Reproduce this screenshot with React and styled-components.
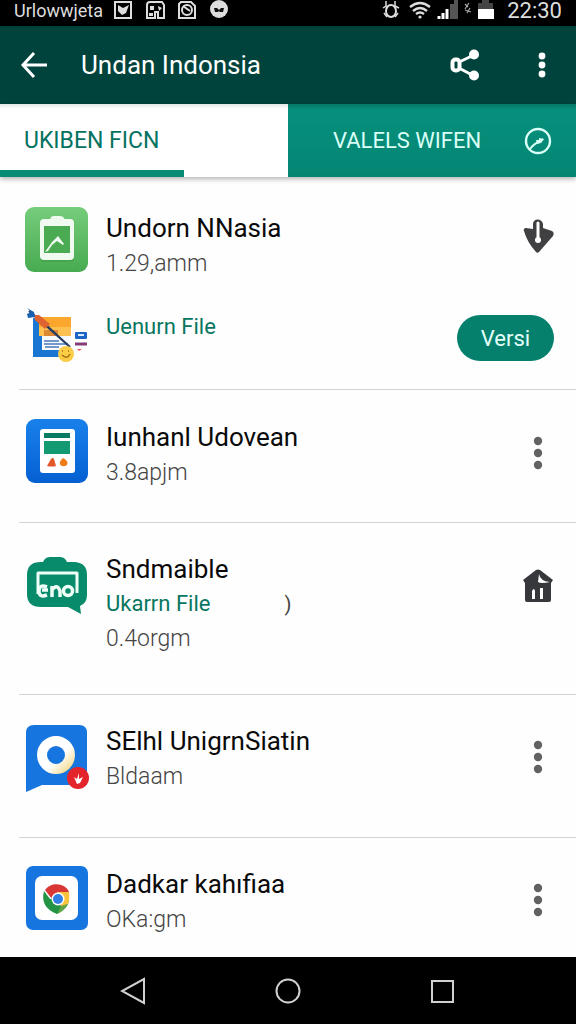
import React from "react";
import styled, { createGlobalStyle } from "styled-components";

export default function App() {
  return (
    <>
      <GlobalStyle />
      <Page>
        <StatusBar>
          <StatusGroup>
            <span>Urlowwjeta</span>
            <StatusIcons />
          </StatusGroup>
          <StatusGroup $end>
            <SystemIcons />
            <time>22:30</time>
          </StatusGroup>
        </StatusBar>
        <Header>
          <IconButton aria-label="Back">
            <svg width="28" height="28" viewBox="0 0 28 28" fill="none" stroke="#fff" strokeWidth="3">
              <path d="M14 2 3 14l11 12M3 14h24" />
            </svg>
          </IconButton>
          <Title>Undan Indonsia</Title>
          <IconButton aria-label="Share">
            <svg width="30" height="32" viewBox="0 0 30 32" fill="none" stroke="#fff">
              <path d="M24 6 7 14M7 18l17 9" strokeWidth="3" />
              <rect x="2.500" y="10.500" width="7" height="11" rx="3" strokeWidth="4" fill="#00433d" />
              <circle cx="24" cy="5.500" r="5" fill="#fff" stroke="none" />
              <circle cx="24" cy="26.500" r="5" fill="#fff" stroke="none" />
            </svg>
          </IconButton>
          <IconButton aria-label="More options">
            <Dots color="#fff" r={3.4} gap={9} />
          </IconButton>
        </Header>
        <Tabs>
          <Tab $active>UKIBEN FICN</Tab>
          <Tab>
            VALELS WIFEN
            <svg width="28" height="28" viewBox="0 0 28 28" fill="none" stroke="#d9fff6">
              <circle cx="14" cy="14" r="12" strokeWidth="2.4" />
              <path d="M6 22c3-4 5-6 9-7l4-3" strokeWidth="2" />
              <path d="m12 13 3 0 0-2 5 1-3 4-4 1Z" fill="#d9fff6" stroke="none" />
            </svg>
          </Tab>
        </Tabs>
        <List>
          <Item $top={30} $bottom={24}>
            <Line>
              <ClipboardIcon />
              <Texts $low>
                <Name>Undorn NNasia</Name>
                <Meta>1.29,amm</Meta>
              </Texts>
              <IconButton aria-label="Tag">
                <svg width="32" height="60" viewBox="0 0 32 60">
                  <path d="M2 24c-1-1 0-3 2-3l7 1v-5c0-6 9-6 10 0v4l9 3c2 1 2 3 1 5L17 45c-1 1-2 1-3 0Q5 35 2 24Z" fill="#404043" />
                  <path d="M16 16v17" stroke="#fff" strokeWidth="3" strokeLinecap="round" />
                  <circle cx="16" cy="33" r="3" fill="#fff" />
                </svg>
              </IconButton>
            </Line>
            <Line $gap>
              <PaintIcon />
              <Texts $low>
                <FileLink href="#file">Uenurn File</FileLink>
              </Texts>
              <VersionButton>Versi</VersionButton>
            </Line>
          </Item>
          <Item $top={29} $bottom={31}>
            <Line>
              <DocumentIcon />
              <Texts>
                <Name>Iunhanl Udovean</Name>
                <Meta>3.8apjm</Meta>
              </Texts>
              <MoreButton />
            </Line>
          </Item>
          <Item $top={28} $bottom={37}>
            <Line>
              <ChatIcon />
              <Texts>
                <Name>Sndmaible</Name>
                <FileRow>
                  <FileLink href="#file">Ukarrn File</FileLink>
                  <span>)</span>
                </FileRow>
                <Meta>0.4orgm</Meta>
              </Texts>
              <IconButton aria-label="Home">
                <svg width="32" height="70" viewBox="0 0 32 70">
                  <path d="m1 29 13-10q2-1 4 0l13 10-2 3H3Z" fill="#37383b" />
                  <path d="M3 31h26v18q0 2-2 2H5q-2 0-2-2Z" fill="#37383b" />
                  <path d="M10 48v-8q2-4 3 0v8ZM18 48V37h3v11Z" fill="#fff" />
                  <path d="M17 23q1 7 11 8-9 2-12 0Z" fill="#fff" />
                </svg>
              </IconButton>
            </Line>
          </Item>
          <Item $top={28} $bottom={42}>
            <Line>
              <LocationIcon />
              <Texts>
                <Name>SElhl UnigrnSiatin</Name>
                <Meta>Bldaam</Meta>
              </Texts>
              <MoreButton />
            </Line>
          </Item>
          <Item $top={28} $bottom={16} $last>
            <Line>
              <BrowserIcon />
              <Texts>
                <Name>Dadkar kahıfiaa</Name>
                <Meta>OKa:gm</Meta>
              </Texts>
              <MoreButton />
            </Line>
          </Item>
        </List>
        <NavBar>
          <NavButton aria-label="Back">
            <svg width="28" height="28" viewBox="0 0 28 28" fill="none" stroke="#d0d0d0" strokeWidth="2">
              <path d="M24 2v24L2 14Z" />
            </svg>
          </NavButton>
          <NavButton aria-label="Home">
            <svg width="28" height="28" viewBox="0 0 28 28" fill="none" stroke="#d0d0d0" strokeWidth="2">
              <circle cx="14" cy="14" r="11.5" />
            </svg>
          </NavButton>
          <NavButton aria-label="Recent apps">
            <svg width="28" height="28" viewBox="0 0 28 28" fill="none" stroke="#d0d0d0" strokeWidth="2">
              <rect x="4" y="4" width="21" height="21" />
            </svg>
          </NavButton>
        </NavBar>
      </Page>
    </>
  );
}

function Dots({ color, r, gap }) {
  return (
    <svg width="32" height="68" viewBox="0 0 32 68" fill={color}>
      <circle cx="16" cy={34 - gap} r={r} />
      <circle cx="16" cy="34" r={r} />
      <circle cx="16" cy={34 + gap} r={r} />
    </svg>
  );
}

function MoreButton() {
  return (
    <IconButton aria-label="More">
      <Dots color="#626262" r={4.2} gap={12} />
    </IconButton>
  );
}

function StatusIcons() {
  return (
    <svg width="116" height="20" viewBox="0 0 116 20" fill="none" stroke="#ddd" strokeWidth="2">
      <rect x="2" y="2" width="16" height="16" />
      <path d="m5 5 5 3 6-3-3 8-4 2-4-4Z" fill="#ddd" stroke="none" />
      <path d="M34 18V5q0-3 3-3h12l2 3v13h-6v-6h-3v6Z" />
      <path d="M37 6h4v4h-4ZM45 6l4 2-3 3ZM36 13h4v3h-4Z" fill="#ddd" stroke="none" />
      <path d="M68 2h10l4 4v12H66V4Z" />
      <circle cx="74" cy="10" r="5" />
      <path d="m70 6 7 5" />
      <circle cx="106" cy="9" r="9" fill="#ddd" stroke="none" />
      <path d="M101 8h3l2 2 2-2h3l-1 4h-3l-1-1-1 1h-3Z" fill="#111" stroke="none" />
    </svg>
  );
}

function SystemIcons() {
  return (
    <svg width="114" height="20" viewBox="0 0 114 20" fill="none" stroke="#ddd" strokeWidth="2">
      <ellipse cx="10" cy="11" rx="5" ry="6" />
      <path d="M5 1v5l-3 2M14 1v5l4 2M3 13l3 4M17 13l-3 4" strokeWidth="1.5" />
      <path d="M29 7q10-8 20 0M32 11q7-6 14 0M35 14q4-3 8 0" strokeWidth="2.4" />
      <circle cx="39" cy="17" r="1.6" fill="#ddd" stroke="none" />
      <path d="M58 19v-3M62 19v-6M66 19V9" stroke="#fff" strokeWidth="3" />
      <path d="M71 19V4M75 19V0" stroke="#555" strokeWidth="4" />
      <path d="m84 4 3 3m1-4-4 6m5-1-3 5m-2-3 6 2" stroke="#aaa" strokeWidth="1.2" />
      <path d="M97 3h4V0h7v3h4v6H97Z" fill="#444" stroke="none" />
      <path d="M97 9h16v10H97Z" fill="#fff" stroke="none" />
    </svg>
  );
}

function ClipboardIcon() {
  return (
    <AppIcon viewBox="0 0 64 70">
      <defs>
        <linearGradient id="green" x2="0" y2="1">
          <stop stopColor="#76cd7c" />
          <stop offset="1" stopColor="#47aa50" />
        </linearGradient>
      </defs>
      <rect width="63" height="65" rx="9" fill="url(#green)" />
      <path d="M26 10q1-1 3-1h6q3 0 4 2l1 2H25Z" fill="#eefaee" />
      <rect x="15" y="14" width="34" height="41" rx="4" fill="#3b9a45" opacity=".5" />
      <rect x="15" y="12" width="34" height="41" rx="4" fill="#f1faf1" />
      <path d="M19 19h26v27H19Z" fill="#4bab53" />
      <path d="m20 45 7-10 6-6 6 8-1 1-6-4-5 4-4 6Z" fill="#f1faf1" />
    </AppIcon>
  );
}

function PaintIcon() {
  return (
    <AppIcon $low viewBox="0 0 64 58">
      <path d="M8 11h38v39H8Z" fill="#1976d2" />
      <path d="M14 10h32v19H14Z" fill="#ffc052" />
      <path d="M14 10h32v10H14Z" fill="#fba62d" />
      <path d="M17 29h29v14H17Z" fill="#f7faff" />
      <path d="M19 23h14v6H19Z" fill="#dc8935" />
      <path d="M19 34h15M19 37h24M20 40h14" stroke="#4779b7" strokeWidth="1.5" />
      <path d="m4 4 16 13 25 23-18-16Z" fill="#263d63" stroke="#263d63" strokeWidth="2" />
      <path d="m9 8 5 0 11 9-5 5-10-9Z" fill="#df6231" />
      <path d="M2 1 9 5l1 5-7 1-1-4 4-2Z" fill="#1760b4" />
      <circle cx="41" cy="47" r="8" fill="#fbcc45" />
      <path d="M37 44h1M43 44h1M37 48q5 5 8-1" stroke="#a66f13" strokeWidth="1.5" fill="none" />
      <rect x="50" y="25" width="12" height="7" rx="1" fill="#1c65c7" />
      <path d="M53 28h6" stroke="#d5eaff" strokeWidth="2" />
      <path d="M50 37h12" stroke="#843b78" strokeWidth="3" />
      <path d="m52 42 5 0-3 2Z" fill="#e15b58" />
    </AppIcon>
  );
}

function DocumentIcon() {
  return (
    <AppIcon viewBox="0 0 64 70">
      <defs>
        <linearGradient id="blue" x2="0" y2="1">
          <stop stopColor="#1980eb" />
          <stop offset="1" stopColor="#0560d2" />
        </linearGradient>
      </defs>
      <rect x="1" width="62" height="64" rx="9" fill="url(#blue)" />
      <rect x="15" y="10" width="35" height="44" rx="3" fill="#fff" />
      <path d="M19 14h26v5H19Z" fill="#087c62" />
      <path d="M19 22h26v13H19Z" fill="#149a72" />
      <path d="m22 47 4-7q2-2 3 0l2 7q-4 1-9 0Z" fill="#e3572a" />
      <path d="M38 39c5 2 6 7 2 8-6 1-7-4-2-8Z" fill="#ef7c17" />
    </AppIcon>
  );
}

function ChatIcon() {
  return (
    <AppIcon viewBox="0 0 64 70">
      <path d="M18 11c3-6 6-5 12-5s9-1 12 5h8q12 1 12 13v20q0 8-7 11l1 8-13-7H16Q2 56 2 43V24Q2 11 16 11Z" fill="#078b6b" />
      <path d="M13 43V22h39v20" fill="none" stroke="#effff8" strokeWidth="3" strokeLinejoin="round" />
      <path d="M22 36q-8-3-8 4 0 7 8 4M17 39h6M27 46V35M27 39q5-7 8 1v6" fill="none" stroke="#effff8" strokeWidth="3.5" />
      <circle cx="43" cy="40" r="4.500" fill="none" stroke="#effff8" strokeWidth="3.5" />
    </AppIcon>
  );
}

function LocationIcon() {
  return (
    <AppIcon viewBox="0 0 64 70">
      <defs>
        <linearGradient id="ring" x2="1" y2="1">
          <stop offset=".6" stopColor="#fff" />
          <stop offset="1" stopColor="#f5dc94" />
        </linearGradient>
      </defs>
      <path d="M9 2h45q8 0 8 8v52H17L1 69V10q0-8 8-8Z" fill="#1675df" />
      <circle cx="31" cy="32" r="14" fill="none" stroke="url(#ring)" strokeWidth="10" />
      <circle cx="53" cy="55" r="11" fill="#e3252b" />
      <path d="m49 54 3 2 2-6v6l4-2-3 6-3 1Z" fill="#fff" />
    </AppIcon>
  );
}

function BrowserIcon() {
  return (
    <AppIcon viewBox="0 0 64 70">
      <rect x="1" width="62" height="64" rx="7" fill="#1675df" />
      <rect x="10" y="10" width="43" height="44" rx="7" fill="#fff" />
      <path d="M19 25c-3 11 2 19 13 23 8-4 12-9 12-15H25Z" fill="#239345" />
      <path d="M20 24c6-9 21-7 24 2H33l-6 7Z" fill="#d83735" />
      <path d="M33 26h11q1 7-1 12l-7 3Z" fill="#fbc23c" />
      <path d="m32 48 4-8 7-2q-3 6-11 10Z" fill="#62a547" />
      <circle cx="33" cy="33" r="6.5" fill="#fff" />
      <circle cx="33" cy="33" r="5" fill="#347fe5" />
    </AppIcon>
  );
}

const GlobalStyle = createGlobalStyle`
  * {
    box-sizing: border-box;
  }
  body {
    margin: 0;
    background: #fefefe;
    font-family: Roboto, "Liberation Sans", sans-serif;
  }
  button {
    font-family: inherit;
    border: 0;
    padding: 0;
    background: none;
    cursor: pointer;
  }
  svg {
    display: block;
    flex-shrink: 0;
  }
`;

const Page = styled.div`
  min-height: 100vh;
  display: flex;
  flex-direction: column;
`;

const StatusBar = styled.div`
  display: flex;
  justify-content: space-between;
  height: 26px;
  padding: 0 14px;
  background: #000;
  color: #ddd;
  line-height: 22px;
`;

const StatusGroup = styled.div`
  display: flex;
  gap: ${(props) => (props.$end ? "12px" : "10px")};
  font-size: ${(props) => (props.$end ? "22px" : "18px")};
`;

const Header = styled.header`
  display: flex;
  align-items: center;
  height: 78px;
  padding: 0 18px 0 20px;
  background: #00433d;
`;

const Title = styled.h1`
  flex: 1;
  margin: 0 0 0 33px;
  font-size: 26px;
  font-weight: 400;
  color: #fff;

  & + button {
    margin-right: 46px;
  }
`;

const IconButton = styled.button`
  display: block;
  flex-shrink: 0;
`;

const Tabs = styled.div`
  display: grid;
  grid-template-columns: 1fr 1fr;
  height: 73px;
  box-shadow: 0 2px 5px rgba(0, 0, 0, 0.3);
`;

const Tab = styled.button`
  position: relative;
  display: flex;
  align-items: center;
  justify-content: space-between;
  padding: ${(props) => (props.$active ? "0 24px" : "0 24px 0 45px")};
  font-size: ${(props) => (props.$active ? "23px" : "22px")};
  color: ${(props) => (props.$active ? "#04725f" : "#d9fff6")};
  background: ${(props) =>
    props.$active
      ? "linear-gradient(#e4e8e8, #fff 5px)"
      : "linear-gradient(#047766, #06907c 6px, #048573)"};

  &::after {
    content: "";
    display: ${(props) => (props.$active ? "block" : "none")};
    position: absolute;
    left: 0;
    bottom: 0;
    width: 64%;
    height: 7px;
    background: #078b74;
  }
`;

const List = styled.ul`
  flex: 1;
  margin: 0;
  padding: 0;
  list-style: none;
`;

const Item = styled.li`
  margin-left: 19px;
  padding: ${(props) => props.$top}px 22px ${(props) => props.$bottom}px 6px;
  border-bottom: ${(props) => (props.$last ? "0" : "1px solid #d2d2d2")};
`;

const Line = styled.div`
  display: flex;
  align-items: flex-start;
  gap: 17px;
  margin-top: ${(props) => (props.$gap ? "25px" : "0")};
`;

const AppIcon = styled.svg`
  width: 64px;
  height: ${(props) => (props.$low ? "58px" : "70px")};
`;

const Texts = styled.div`
  flex: 1;
  min-width: 0;
  padding-top: ${(props) => (props.$low ? "3px" : "0")};
`;

const Name = styled.h2`
  margin: 0;
  font-size: 26px;
  line-height: 36px;
  font-weight: 400;
  color: #0a0a0a;
`;

const Meta = styled.p`
  margin: 0;
  font-size: 23px;
  line-height: 36px;
  font-weight: 300;
  color: #444;
`;

const FileLink = styled.a`
  font-size: 22px;
  line-height: 34px;
  color: #087660;
  text-decoration: none;
`;

const FileRow = styled.div`
  display: flex;
  gap: 74px;
  line-height: 34px;
  font-size: 20px;
  color: #444;
`;

const VersionButton = styled.button`
  width: 97px;
  height: 46px;
  margin-top: 8px;
  border-radius: 23px;
  background: #04806d;
  color: #e4fffa;
  font-size: 22px;
`;

const NavBar = styled.nav`
  display: flex;
  justify-content: center;
  gap: 126px;
  height: 67px;
  background: #000;
`;

const NavButton = styled.button`
  display: flex;
  align-items: center;
`;
